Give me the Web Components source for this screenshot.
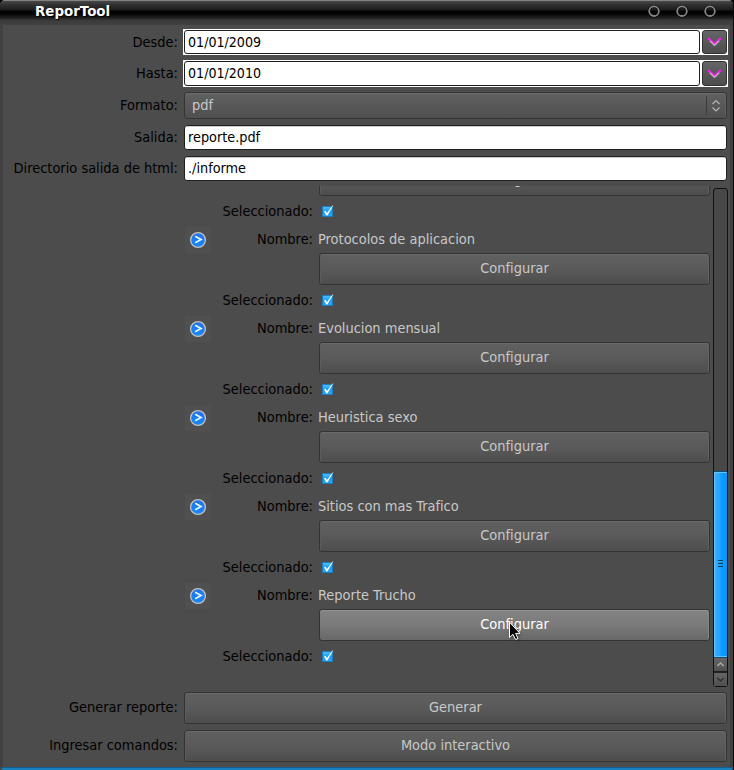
<!DOCTYPE html>
<html lang="es"><head><meta charset="utf-8"><title>ReporTool</title>
<style>
html,body{margin:0;padding:0;background:#000}
body{width:734px;height:770px;overflow:hidden;font:14.45px/16px "DejaVu Sans Condensed","DejaVu Sans",sans-serif;color:#000}
</style></head><body>
<report-window heading="ReporTool">
 <form-row label="Desde:" style="--h:26px;--lift:0px;margin-top:4px"><date-field value="01/01/2009"></date-field></form-row>
 <form-row label="Hasta:" style="--h:27px;margin-top:5px"><date-field value="01/01/2010"></date-field></form-row>
 <form-row label="Formato:" style="--h:27px;margin-top:5px"><combo-field value="pdf"></combo-field></form-row>
 <form-row label="Salida:" style="--h:25px;margin-top:6px"><text-field value="reporte.pdf"></text-field></form-row>
 <form-row label="Directorio salida de html:" style="--h:25px;margin-top:6px"><text-field value="./informe"></text-field></form-row>
 <scroll-panel>
  <report-item partial name="" style="margin-top:-22px"></report-item>
  <report-item name="Protocolos de aplicacion"></report-item>
  <report-item name="Evolucion mensual"></report-item>
  <report-item name="Heuristica sexo"></report-item>
  <report-item name="Sitios con mas Trafico"></report-item>
  <report-item name="Reporte Trucho" hot></report-item>
 </scroll-panel>
 <form-row label="Generar reporte:" style="--h:32px;margin-top:5px"><push-button>Generar</push-button></form-row>
 <form-row label="Ingresar comandos:" style="--h:32px;margin-top:6px"><push-button>Modo interactivo</push-button></form-row>
</report-window>
<mouse-pointer></mouse-pointer>
<script>
const define=(tag,render)=>customElements.define(tag,class extends HTMLElement{
  connectedCallback(){
    if(this.shadowRoot)return;
    this.attachShadow({mode:'open'}).innerHTML='<style>*{box-sizing:border-box}:host{box-sizing:border-box}</style>'+render(this);
  }
});
define('report-window',e=>`<style>
:host{display:flex;flex-direction:column;width:734px;height:770px;background:#414141;border-right:1px solid #080808;border-radius:5px 5px 0 0;overflow:hidden}
header{height:25px;flex:none;display:flex;align-items:flex-start;padding:3px 16px 0 35px;background:linear-gradient(#8b9190 0,#777 1px,#484848 1px,#303030 5px,#1d1d1d 10px,#020202 11px,#050505 14px,#292929 19px,#3a3a3a 20px,#414141 25px)}
h1{font:bold 13.4px/17px "DejaVu Sans",sans-serif;color:#fff;margin:0;flex:1;text-shadow:1px 1px 1px #000}
svg{width:70px;height:16px;flex:none}
main{margin:0 3px;flex:1;background:#4c4c4c;padding-right:2px;display:flex;flex-direction:column}
footer{height:3px;flex:none;background:linear-gradient(#155d8d 0 1px,#1680bf 1px 3px);margin-left:1px;border-radius:0 0 3px 3px}
</style><header><h1>${e.getAttribute('heading')}</h1><svg viewBox="0 0 70 16" fill="none" stroke="#858585" stroke-width="1.8"><g stroke="#000" stroke-width="3" stroke-opacity=".6"><circle cx="7" cy="8.2" r="4.8"/><circle cx="35" cy="8.2" r="4.8"/><circle cx="63" cy="8.2" r="4.8"/></g><circle cx="7" cy="8.2" r="4.8"/><circle cx="35" cy="8.2" r="4.8"/><circle cx="63" cy="8.2" r="4.8"/></svg></header><main><slot></slot></main><footer></footer>`);
define('form-row',e=>`<style>
:host{display:grid;grid-template-columns:175px 545px;column-gap:5px;height:var(--h);align-items:center;flex:none}
label{text-align:right;white-space:nowrap;padding-bottom:var(--lift,2px)}
div{height:100%;display:grid}
</style><label>${e.getAttribute('label')}</label><div><slot></slot></div>`);
define('date-field',e=>`<style>
:host{display:flex;background:#fff;padding:1px;gap:2px;font-size:14.1px}
span{flex:1;border:1px solid #202020;border-radius:3px;padding:3px 3px 0;line-height:17px}
i{width:25px;border:1px solid #303030;border-radius:3px;background:linear-gradient(#656565,#4d4d4d);display:grid;place-items:center}
svg{width:15px;height:12px}
</style><span>${e.getAttribute('value')}</span><i><svg viewBox="0 0 15 12" fill="none"><path d="M1.2 2.2 7.5 8.2 13.8 2.2" stroke="#f719ed" stroke-width="2.4"/><path d="M2.8 4.7 7.5 9.2 12.2 4.7" stroke="#cba9ca" stroke-width="1.5"/></svg></i>`);
define('text-field',e=>`<style>
:host{display:block;margin:0 1px;background:#fff;border:1px solid #202020;border-radius:3px;padding:3px 3px 0;box-shadow:inset 0 1px #ccc;font-size:14.3px}
</style>${e.getAttribute('value')}`);
define('combo-field',e=>`<style>
:host{display:flex;margin:0 1px;border:1px solid #353535;border-radius:3px;background:linear-gradient(#616161,#4f4f4f);box-shadow:inset 0 1px #696969,inset -1px 0 #606060;color:#c8c8c8;padding:0 4px 0 7px;align-items:center}
span{flex:1;padding-bottom:2px}
i{height:19px;width:15px;border-left:1px solid #3b3b3b;box-sizing:content-box}
svg{width:15px;height:19px;display:block;margin-left:1px}
</style><span>${e.getAttribute('value')}</span><i><svg viewBox="0 0 15 19" fill="none" stroke="#b4b4b4" stroke-width="1.2"><path d="M4.5 8 8 4.5 11.5 8M4.5 11.5 8 15 11.5 11.5"/></svg></i>`);
define('push-button',e=>`<style>
:host{display:grid;place-items:center;margin:0 1px;height:32px;border:1px solid #343434;border-radius:3px;background:linear-gradient(#606060,#5a5a5a 50%,#4d4d4d);box-shadow:inset 0 1px #696969,inset 1px 0 #5c5c5c,inset -1px 0 #626262;color:#c8c8c8;padding-bottom:2px}
:host([hot]){background:linear-gradient(#848484,#7a7a7a 50%,#686868);box-shadow:inset 0 1px #929292,inset -1px 0 #888;color:#fff}
</style><span><slot></slot></span>`);
define('report-item',e=>`<style>
:host{display:grid;grid-template:28px 32px 29px/129px 391px;column-gap:6px;height:89px;flex:none}
:host([partial]){grid-template-rows:32px 29px;height:61px}
.name{display:flex;align-items:center;justify-content:space-between;white-space:nowrap}
.tile{width:26px;height:26px;background:#505050;margin:2px 0 0 1px}
.tile svg{display:block;width:26px;height:26px}
.val{color:#c8c8c8;line-height:28px;margin-left:-1px}
push-button{grid-column:2;margin:0}
.sel{text-align:right;line-height:30px}
.check{width:14px;height:14px;margin:8px 0 0 1.5px}
</style>${e.hasAttribute('partial')?'':`<div class="name"><span class="tile"><svg viewBox="0 0 26 26"><defs><linearGradient id="b" x2="0" y2="1"><stop stop-color="#2373ed"/><stop offset="1" stop-color="#1688ff"/></linearGradient></defs><circle cx="13" cy="13" r="7.4" fill="url(#b)" stroke="#c4c1bb" stroke-width="1.3"/><path d="M10.2 9.3 16 12.6 10.2 15.8" fill="none" stroke="#e6fbff" stroke-width="1.7"/></svg></span><span>Nombre:</span></div><span class="val">${e.getAttribute('name')}</span>`}
<push-button ${e.hasAttribute('hot')?'hot':''}>Configurar</push-button>
<span class="sel">Seleccionado:</span><svg class="check" viewBox="0 0 14 14"><defs><linearGradient id="c" x2="0" y2="1"><stop stop-color="#55bdff"/><stop offset=".5" stop-color="#159fff"/><stop offset="1" stop-color="#2aa8ff"/></linearGradient></defs><rect x="1.5" y="2.5" width="10" height="10" fill="url(#c)" stroke="#1b7ab8" stroke-width=".8"/><path d="M3 7.5 4.6 6.8 6 9 11.2 2 12.5 1 6.4 11.6 5.4 11.6Z" fill="#fff"/></svg>`);
define('scroll-panel',e=>`<style>
:host{display:flex;height:501px;margin:5px 0 0 181px;overflow:hidden;flex:none}
.view{flex:1;display:flex;flex-direction:column;overflow:hidden}
.bar{width:15px;margin:2px 0 0;flex:none;display:flex;flex-direction:column;border:1px solid #111;border-radius:3px;background:#484848}
.track{height:282px;flex:none}
.thumb{height:187px;flex:none;border:1px solid #0b4d78;border-width:1px 0;background:linear-gradient(90deg,#3cb1ff,#26a4ff 45%,#0c9bff 60%,#009aff);box-shadow:inset 1px 1px #65c4ff,inset 0 -1px #65c4ff;display:grid;place-items:center}
.thumb i{width:5px;height:7px;background:repeating-linear-gradient(#123c5a 0 1px,transparent 1px 3px);margin-bottom:2px}
.btn{flex:1;display:grid;place-items:center;background:linear-gradient(#656565,#505050);border-bottom:1px solid #1c1c1c}
.btn+.btn{border-bottom:0;border-top:1px solid #222}
svg{width:9px;height:7px}
</style><div class="view"><slot></slot></div><div class="bar"><div class="track"></div><div class="thumb"><i></i></div><div class="btn"><svg viewBox="0 0 9 7" fill="none" stroke="#ababab" stroke-width="1.5"><path d="M1.3 5 4.5 2 7.7 5"/></svg></div><div class="btn"><svg viewBox="0 0 9 7" fill="none" stroke="#303030" stroke-width="1.5"><path d="M1.3 2 4.5 5 7.7 2"/></svg></div></div>`);
define('mouse-pointer',e=>`<style>
:host{position:absolute;left:508px;top:621px;width:14px;height:20px}
svg{display:block;filter:drop-shadow(1px 1px 1px #0006)}
</style><svg width="14" height="20" viewBox="0 0 14 20"><path d="M1.5 1.2V16.5L5 13.3 7.6 18.6 10 17.5 7.7 12.4H12Z" fill="#050505" stroke="#fff" stroke-width="1"/></svg>`);
</script></body></html>
